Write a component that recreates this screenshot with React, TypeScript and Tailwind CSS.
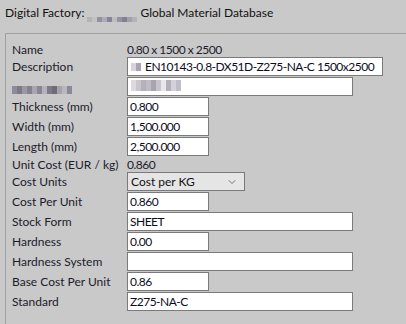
import { ChevronDown } from "lucide-react";

const font = { fontFamily: '"Segoe UI", Lato, "Noto Sans", sans-serif' };

// pixelated stand-in for blurred-out text
function Mosaic({ cells, h }: { cells: string[]; h: string }) {
    return (
        <span className={`inline-flex ${h}`}>
            {cells.map((c, i) => (
                <span key={i} className="w-[5px] h-full" style={{ background: c }} />
            ))}
        </span>
    );
}

function Box({ w, children }: { w: string; children?: React.ReactNode }) {
    return (
        <div className={`${w} h-[19px] bg-white border border-[#7a7a7a] flex items-center pl-[2px] text-[#0b0b1e] tracking-[-0.5px] whitespace-nowrap overflow-hidden`}>
            {children}
        </div>
    );
}

function Row({ label, h = "h-[20px]", children }: { label: React.ReactNode; h?: string; children: React.ReactNode }) {
    return (
        <div className={`flex ${h}`}>
            <div className="w-[115px] flex items-start pt-[2px] text-[#1b1b2b] whitespace-nowrap">{label}</div>
            <div>{children}</div>
        </div>
    );
}

function Info({ label, value }: { label: string; value: string }) {
    return (
        <div className="flex h-[15px] text-[#1b1b2b]">
            <div className="w-[115px] whitespace-nowrap">{label}</div>
            <div className="tracking-[-0.5px]">{value}</div>
        </div>
    );
}

export default function App() {
    return (
        <div className="w-[406px] h-[324px] bg-[#c9c9c9] overflow-hidden text-[12px] leading-[15px]" style={font}>
            <div className="h-[33px] pl-[5px] pt-[5px] flex items-start gap-[3px] text-[#111]">
                <span>Digital Factory:</span>
                <span className="mt-[5px]">
                    <Mosaic h="h-[5px]" cells={["#b3b3b8", "#c3c3c3", "#948fa0", "#aeabb5", "#87839a", "#bdbdbf", "#9691a3", "#837e92", "#a39faf", "#b3b3b6"]} />
                </span>
                <span>Global Material Database</span>
            </div>
            <div className="ml-[5px] h-[300px] border-l border-t border-[#a0a0a0] pl-[6px] pt-[8px]">
                <Info label="Name" value="0.80 x 1500 x 2500" />
                <Row label="Description">
                    <Box w="w-[256px]">
                        <span className="mr-[4px] ml-[1px]">
                            <Mosaic h="h-[8px]" cells={["#d8d4dc", "#a9a3b3"]} />
                        </span>
                        EN10143-0.8-DX51D-Z275-NA-C 1500x2500
                    </Box>
                </Row>
                <Row
                    label={
                        <span className="mt-[3px]">
                            <Mosaic h="h-[8px]" cells={["#8f8b99", "#7d7987", "#9c97a5", "#85818f", "#a8a4b0", "#8a8692", "#b5b2bb", "#7e7a88", "#6f6b79", "#a5a1ad", "#b9b9bb", "#8c8896"]} />
                        </span>
                    }
                >
                    <Box w="w-[226px]">
                        <span className="ml-[1px]">
                            <Mosaic h="h-[11px]" cells={["#dcdae0", "#c9c6ce", "#b4b1bb", "#bfbcc5", "#a8a5b0", "#c7c4cd", "#e8e7ea", "#b3b0ba", "#d4d2d8", "#c0bdc6"]} />
                        </span>
                    </Box>
                </Row>
                <Row label="Thickness (mm)">
                    <Box w="w-[82px]">0.800</Box>
                </Row>
                <Row label="Width (mm)">
                    <Box w="w-[82px]">1,500.000</Box>
                </Row>
                <Row label="Length (mm)">
                    <Box w="w-[82px]">2,500.000</Box>
                </Row>
                <Info label="Unit Cost (EUR / kg)" value="0.860" />
                <Row label="Cost Units">
                    <div className="w-[118px] h-[19px] bg-[#e5e5e5] border border-[#7a7a7a] flex items-center justify-between pl-[3px] pr-[6px] text-[#111]">
                        <span>Cost per KG</span>
                        <ChevronDown size={12} strokeWidth={1.25} className="text-[#333]" />
                    </div>
                </Row>
                <Row label="Cost Per Unit">
                    <Box w="w-[82px]">0.860</Box>
                </Row>
                <Row label="Stock Form">
                    <Box w="w-[226px]">SHEET</Box>
                </Row>
                <Row label="Hardness">
                    <Box w="w-[82px]">0.00</Box>
                </Row>
                <Row label="Hardness System">
                    <Box w="w-[226px]" />
                </Row>
                <Row label="Base Cost Per Unit">
                    <Box w="w-[82px]">0.86</Box>
                </Row>
                <Row label="Standard">
                    <Box w="w-[226px]">Z275-NA-C</Box>
                </Row>
            </div>
        </div>
    );
}
